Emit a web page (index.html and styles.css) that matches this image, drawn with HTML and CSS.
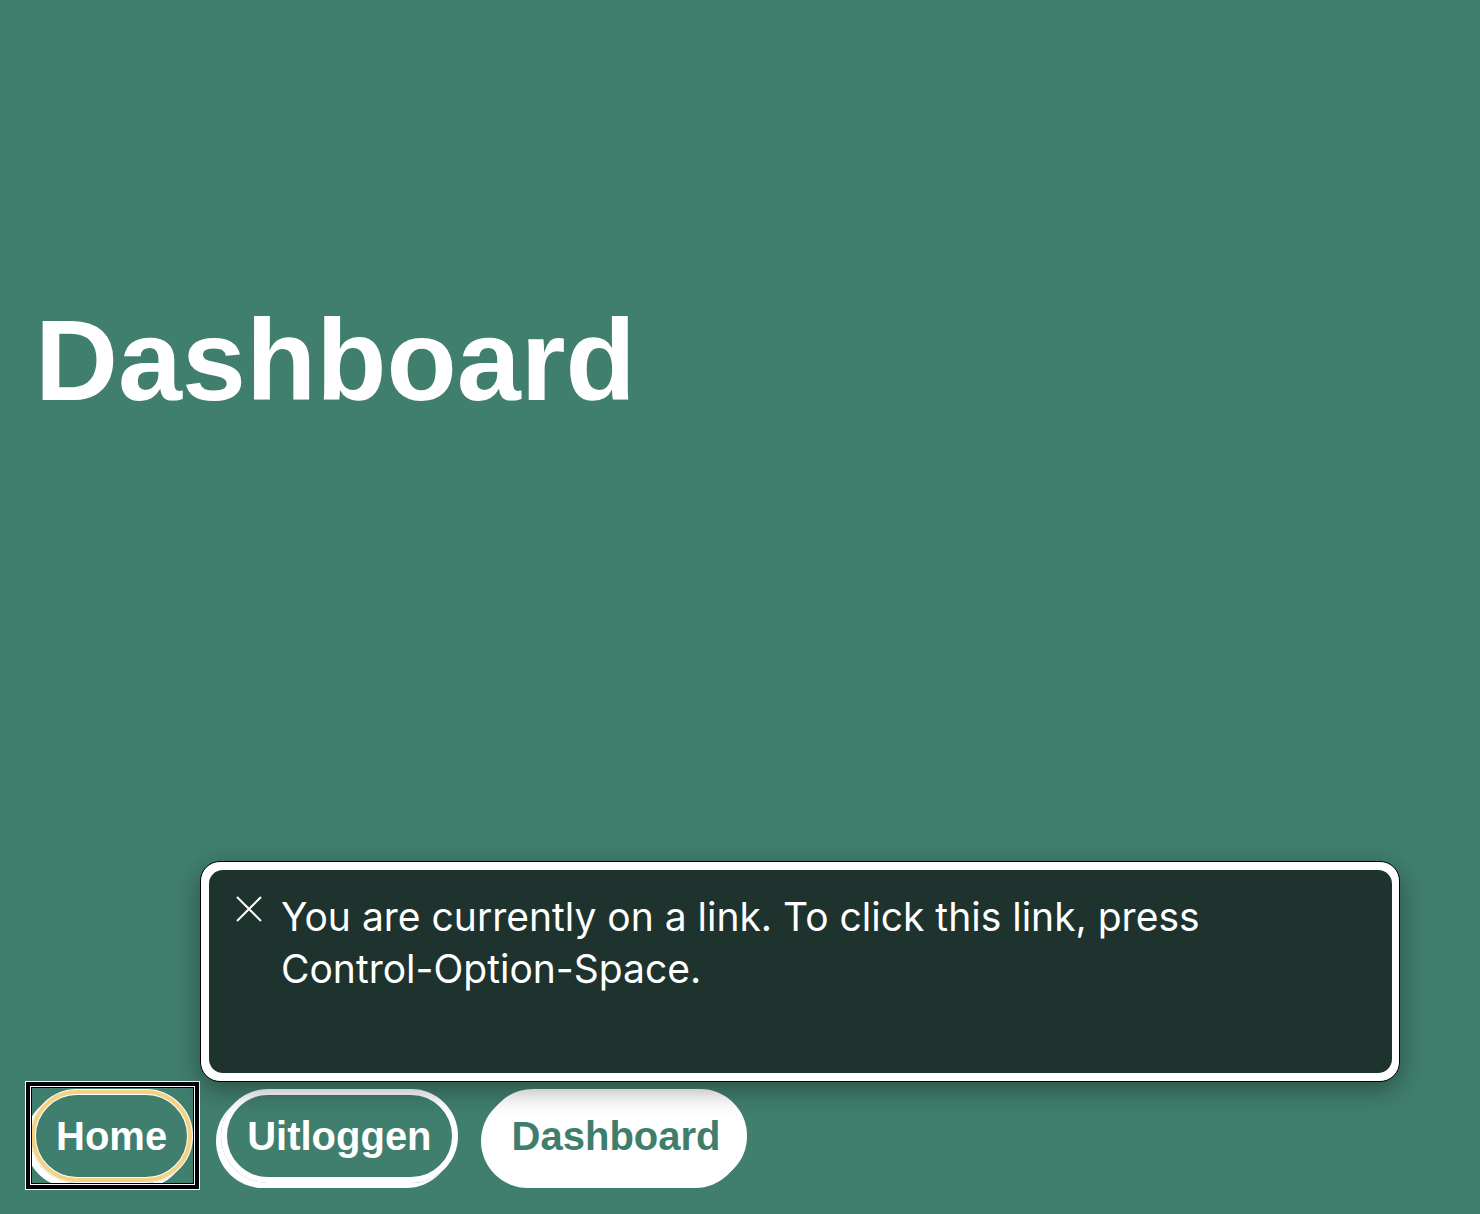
FILE: index.html
```html
<!DOCTYPE html>
<html lang="nl">
<head>
<meta charset="utf-8">
<title>Dashboard</title>
<link rel="stylesheet" href="styles.css">
</head>
<body>
<div class="page">
  <main class="main">
    <h1 class="title">Dashboard</h1>
  </main>
  <nav class="nav">
    <span class="focus-wrap">
      <a class="pill pill--focused" href="#">Home</a>
      <span class="vo-cursor" aria-hidden="true"></span>
    </span>
    <a class="pill" href="#">Uitloggen</a>
    <a class="pill pill--active" href="#">Dashboard</a>
  </nav>
</div>
<div class="caption" role="status">
  <div class="caption-inner">
    <svg class="caption-close" width="26" height="26" viewBox="0 0 26 26" aria-hidden="true">
      <path d="M1 1 L25 25 M25 1 L1 25" stroke="#ffffff" stroke-width="2" fill="none"/>
    </svg>
    <p class="caption-text">You are currently on a link. To click this link, press Control-Option-Space.</p>
  </div>
</div>
</body>
</html>
```
FILE: styles.css
```css
html, body {
  margin: 0;
  padding: 0;
}
body {
  background: #407e6e;
  font-family: "Liberation Sans", Arial, Helvetica, sans-serif;
  color: #ffffff;
  position: relative;
  min-height: 1214px;
}
.page {
  display: flex;
  flex-direction: column;
  min-height: 1214px;
}
.main {
  flex: 1;
  padding: 291px 0 0 35px;
}
.title {
  margin: 0;
  font-size: 115px;
  line-height: 1.2;
  font-weight: 700;
  color: #ffffff;
}
.nav {
  display: flex;
  align-items: center;
  gap: 28px;
  padding: 0 0 31px 30px;
}
.focus-wrap {
  position: relative;
  display: inline-flex;
}
.pill {
  display: inline-block;
  font-size: 40px;
  font-weight: 700;
  line-height: 46px;
  padding: 18px 20px;
  border: 6px solid #ffffff;
  border-radius: 48px;
  color: #ffffff;
  text-decoration: none;
  box-shadow: -5px 5px 0 #ffffff;
}
.pill--active {
  background: #ffffff;
  color: #3f7d6d;
}
.pill--focused {
  outline: 4px solid #f2d283;
  outline-offset: -5px;
}
.vo-cursor {
  position: absolute;
  left: -4px;
  top: -7px;
  right: -6px;
  bottom: -6px;
  border: 4px solid #000000;
  outline: 1px solid #ffffff;
  box-shadow: inset 0 0 0 1px #ffffff, inset 0 0 0 2px #000000;
  pointer-events: none;
}
.caption {
  position: absolute;
  left: 200px;
  top: 861px;
  width: 1200px;
  height: 221px;
  box-sizing: border-box;
  background: #ffffff;
  border: 1px solid #000000;
  border-radius: 20px;
  padding: 8px 7px 8px 8px;
  box-shadow: 0 8px 26px rgba(0, 0, 0, 0.35);
}
.caption-inner {
  height: 100%;
  box-sizing: border-box;
  background: #1e332e;
  border-radius: 14px;
  display: flex;
  align-items: flex-start;
  gap: 19px;
  padding: 21px 30px 0 27px;
}
.caption-close {
  flex: none;
  margin-top: 5px;
}
.caption-text {
  margin: 0;
  font-family: Inter, "Noto Sans", sans-serif;
  font-size: 39px;
  line-height: 52px;
  color: #ffffff;
  max-width: 960px;
}
```
